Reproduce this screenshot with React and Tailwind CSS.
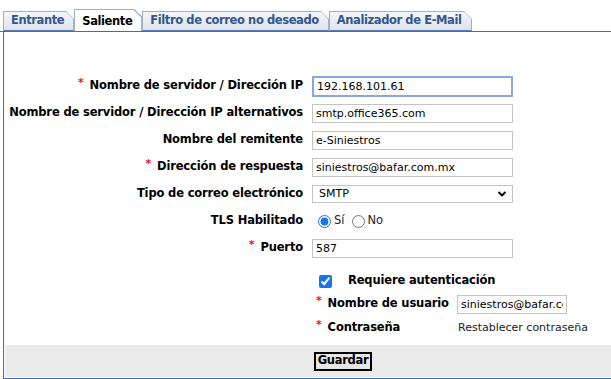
import { useState } from 'react';

const font = { fontFamily: '"DejaVu Sans", Verdana, sans-serif' };

function Tab({ label, active }) {
  return (
    <div
      className={`relative flex items-end pl-[7px] pr-[9px] border border-[#9fb0c8] ${
        active
          ? 'h-[22px] bg-white text-black border-b-0 border-[#5b7fb5]'
          : 'h-[20px] bg-gradient-to-b from-[#f4f6fa] to-[#dde3ec] text-[#34568b] border-b-[#5b7fb5]'
      }`}
    >
      <span className="pb-[4px] text-[11.5px] tracking-[-0.4px] font-bold leading-none whitespace-nowrap">{label}</span>
      <svg className="absolute -top-px -right-px" width="8" height="8" viewBox="0 0 8 8">
        <polygon points="0,0 8,0 8,8" fill="white" />
        <line x1="0" y1="0.5" x2="7.5" y2="8" stroke={active ? '#5b7fb5' : '#b8c4d6'} strokeWidth="1" />
      </svg>
    </div>
  );
}

function Star() {
  return <span className="text-[#e8102a] mr-[6px] text-[11px] align-top relative top-[-2px]">*</span>;
}

function Row({ label, req, children }) {
  return (
    <>
      <div className="text-right text-[11.5px] tracking-[-0.15px] font-bold text-black whitespace-nowrap self-center">
        {req && <Star />}
        {label}
      </div>
      <div className="self-center flex items-center h-[20px]">{children}</div>
    </>
  );
}

function TextInput({ value, focused, width = 'w-[201px]' }) {
  return (
    <input
      readOnly
      value={value}
      className={`${width} h-[19px] px-[3px] text-[11px] text-black outline-none ${
        focused ? 'border-2 border-[#8aa5e6] h-[21px] px-[2px]' : 'border border-[#c4c4c4]'
      }`}
      style={font}
    />
  );
}

export default function App() {
  const [tls, setTls] = useState('si');
  const [auth, setAuth] = useState(true);

  return (
    <div className="w-[611px] h-[379px] bg-white overflow-hidden" style={font}>
      {/* Tabs */}
      <div className="flex items-end pt-[9px] pl-[3px] border-b border-[#3b6fb6] relative z-10">
        <Tab label="Entrante" />
        <Tab label="Saliente" active />
        <Tab label="Filtro de correo no deseado" />
        <Tab label="Analizador de E-Mail" />
      </div>

      {/* Panel */}
      <div className="ml-[3px] -mt-px border-l border-b border-[#3b6fb6] h-[348px] flex flex-col">
        <div className="flex-1 pt-[45px]">
          <div className="grid grid-cols-[299px_1fr] gap-x-[9px] gap-y-[7px]">
            <Row label="Nombre de servidor / Dirección IP" req>
              <TextInput value="192.168.101.61" focused />
            </Row>
            <Row label="Nombre de servidor / Dirección IP alternativos">
              <TextInput value="smtp.office365.com" />
            </Row>
            <Row label="Nombre del remitente">
              <TextInput value="e-Siniestros" />
            </Row>
            <Row label="Dirección de respuesta" req>
              <TextInput value="siniestros@bafar.com.mx" />
            </Row>
            <Row label="Tipo de correo electrónico">
              <div className="w-[201px] h-[18px] border border-[#c4c4c4] flex items-center justify-between pl-[6px] pr-[5px] text-[11px]">
                <span>SMTP</span>
                <svg width="10" height="8" viewBox="0 0 10 8">
                  <path d="M1.5 2 L5 5.5 L8.5 2" fill="none" stroke="black" strokeWidth="1.8" />
                </svg>
              </div>
            </Row>
            <Row label="TLS Habilitado">
              <label className="flex items-center ml-[6px] text-[11.5px] text-[#222]">
                <input
                  type="radio"
                  checked={tls === 'si'}
                  onChange={() => setTls('si')}
                  className="w-[13px] h-[13px] m-0 accent-[#1a73e8]"
                />
                <span className="ml-[3px]">Sí</span>
              </label>
              <label className="flex items-center ml-[7px] text-[11.5px] text-[#222]">
                <input
                  type="radio"
                  checked={tls === 'no'}
                  onChange={() => setTls('no')}
                  className="w-[13px] h-[13px] m-0 accent-[#1a73e8]"
                />
                <span className="ml-[3px]">No</span>
              </label>
            </Row>
            <Row label="Puerto" req>
              <TextInput value="587" />
            </Row>
          </div>

          {/* Auth */}
          <div className="ml-[312px] mt-[14px] text-[11.5px] tracking-[-0.15px] font-bold">
            <div className="flex items-center h-[18px]">
              <input
                type="checkbox"
                checked={auth}
                onChange={() => setAuth(!auth)}
                className="w-[13px] h-[13px] m-0 ml-[3px] accent-[#1a73e8]"
              />
              <span className="ml-[16px]">Requiere autenticación</span>
            </div>
            <div className="flex items-center mt-[4px] h-[20px]">
              <div className="w-[141px] whitespace-nowrap">
                <Star />
                Nombre de usuario
              </div>
              <input
                readOnly
                value="siniestros@bafar.com.mx"
                className="w-[110px] h-[19px] px-[3px] font-normal tracking-normal text-[11px] border border-[#c4c4c4] outline-none"
                style={font}
              />
            </div>
            <div className="flex items-center mt-[6px] h-[16px]">
              <div className="w-[142px] whitespace-nowrap">
                <Star />
                Contraseña
              </div>
              <span className="font-normal tracking-normal text-[11px] text-[#222]">Restablecer contraseña</span>
            </div>
          </div>
        </div>

        {/* Footer */}
        <div className="h-[32px] ml-[1px] mb-px bg-[#ebebeb] flex items-center justify-center pl-[70px]">
          <button className="border-2 border-black bg-[#e6e6e6] px-[2px] h-[19px] text-[11.5px] tracking-[-0.3px] font-bold leading-none text-black">
            Guardar
          </button>
        </div>
      </div>
    </div>
  );
}
